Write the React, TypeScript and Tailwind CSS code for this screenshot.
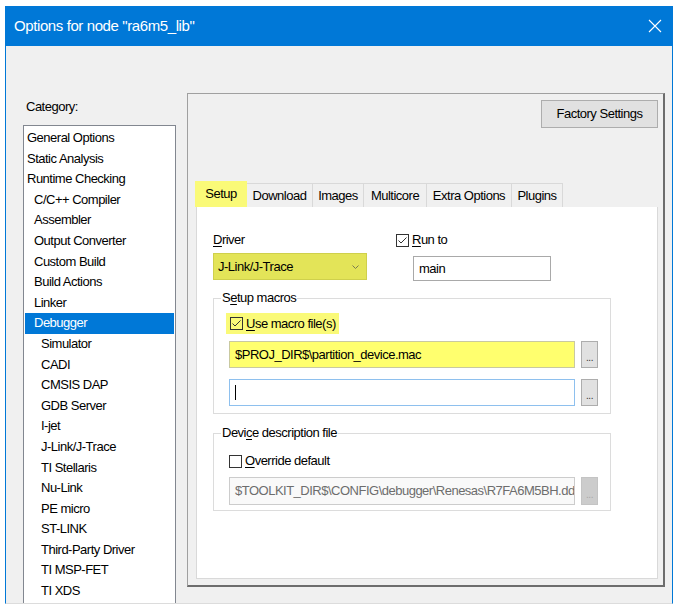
import React from 'react'

const categories: { label: string; level: number }[] = [
  { label: 'General Options', level: 0 },
  { label: 'Static Analysis', level: 0 },
  { label: 'Runtime Checking', level: 0 },
  { label: 'C/C++ Compiler', level: 1 },
  { label: 'Assembler', level: 1 },
  { label: 'Output Converter', level: 1 },
  { label: 'Custom Build', level: 1 },
  { label: 'Build Actions', level: 1 },
  { label: 'Linker', level: 1 },
  { label: 'Debugger', level: 1 },
  { label: 'Simulator', level: 2 },
  { label: 'CADI', level: 2 },
  { label: 'CMSIS DAP', level: 2 },
  { label: 'GDB Server', level: 2 },
  { label: 'I-jet', level: 2 },
  { label: 'J-Link/J-Trace', level: 2 },
  { label: 'TI Stellaris', level: 2 },
  { label: 'Nu-Link', level: 2 },
  { label: 'PE micro', level: 2 },
  { label: 'ST-LINK', level: 2 },
  { label: 'Third-Party Driver', level: 2 },
  { label: 'TI MSP-FET', level: 2 },
  { label: 'TI XDS', level: 2 },
]

const tabs = [
  { label: 'Setup', w: 'w-[52px]' },
  { label: 'Download', w: 'w-[66px]' },
  { label: 'Images', w: 'w-[51px]' },
  { label: 'Multicore', w: 'w-[63px]' },
  { label: 'Extra Options', w: 'w-[85px]' },
  { label: 'Plugins', w: 'w-[51px]' },
]

function CheckBox({ checked, fill = 'white' }: { checked: boolean; fill?: string }) {
  return (
    <svg width="13" height="13" viewBox="0 0 13 13" className="shrink-0">
      <rect x="0.5" y="0.5" width="12" height="12" fill={fill} stroke="#333333" />
      {checked && <polyline points="2.5,6.5 5,9 10.5,3.5" fill="none" stroke="#333333" strokeWidth="1" />}
    </svg>
  )
}

function BrowseButton({ disabled }: { disabled?: boolean }) {
  return (
    <div
      className={`w-[17px] flex items-end justify-center pb-[4px] text-[10px] leading-[10px] border ${
        disabled ? 'bg-[#cccccc] border-[#c4c4c4] text-[#a8a8a8]' : 'bg-[#e1e1e1] border-[#adadad] text-[#333333]'
      }`}
    >
      ...
    </div>
  )
}

export default function App() {
  return (
    <div
      className="w-[682px] h-[614px] bg-white pt-[6px] pl-[5px] overflow-hidden text-[13px] tracking-[-0.5px] text-black"
      style={{ fontFamily: '"Liberation Sans", Arial, sans-serif' }}
    >
      <div className="w-[668px] h-[598px] flex flex-col border-x border-b border-x-[#0078d7] border-b-[#dcdcdc]">
        {/* Title bar */}
        <div className="h-[40px] shrink-0 bg-[#0078d7] flex items-center justify-between pl-[8px] pr-[10px] text-white">
          <span className="text-[15px] tracking-[-0.4px]">Options for node "ra6m5_lib"</span>
          <svg width="14" height="14" viewBox="0 0 14 14">
            <path d="M1 1 L13 13 M13 1 L1 13" stroke="white" strokeWidth="1.1" />
          </svg>
        </div>

        {/* Body */}
        <div className="flex-1 min-h-0 bg-[#f0f0f0] flex overflow-hidden">
          {/* Category column */}
          <div className="pl-[17px] pt-[53px] flex flex-col">
            <div className="leading-[16px] h-[16px] mb-[10px] pl-[3px]">Category:</div>
            <div className="w-[153px] flex-1 bg-white border-t border-x border-[#828790] pt-[2px]">
              {categories.map((c) => {
                const selected = c.label === 'Debugger'
                const pad = c.level === 0 ? 'pl-[2px]' : c.level === 1 ? 'pl-[9px]' : 'pl-[16px]'
                return (
                  <div
                    key={c.label}
                    className={`mx-[1px] h-[20.6px] leading-[20.6px] whitespace-nowrap ${pad} ${
                      selected ? 'bg-[#0078d7] text-white' : ''
                    }`}
                  >
                    {c.label}
                  </div>
                )
              })}
            </div>
          </div>

          {/* Options panel */}
          <div className="ml-[11px] mt-[47px] mb-[16px] w-[478px] flex flex-col border-t border-l border-[#a0a0a0] border-b-2 border-r-2 border-b-[#6d6d6d] border-r-[#6d6d6d]">
            <div className="flex justify-end pt-[6px] pr-[5px]">
              <div className="w-[117px] h-[28px] bg-[#e1e1e1] border border-[#adadad] flex items-center justify-center">
                Factory Settings
              </div>
            </div>

            {/* Tabs */}
            <div className="mt-[53px] ml-[7px] h-[26px] flex items-end">
              {tabs.map((t, i) =>
                i === 0 ? (
                  <div key={t.label} className={`${t.w} h-[26px] bg-[#fafa78] flex items-center justify-center`}>
                    {t.label}
                  </div>
                ) : (
                  <div
                    key={t.label}
                    className={`${t.w} h-[24px] bg-[#f0f0f0] border-t border-r border-[#d9d9d9] flex items-center justify-center`}
                  >
                    {t.label}
                  </div>
                )
              )}
            </div>

            {/* Tab page */}
            <div className="ml-[8px] mr-[5px] mb-[6px] flex-1 bg-white border-x border-b border-[#d9d9d9] pl-[16px] pt-[25px]">
              {/* Driver / Run to */}
              <div className="flex">
                <div className="w-[154px] flex flex-col">
                  <div className="leading-[16px] h-[16px]">
                    <span className="underline underline-offset-2">D</span>river
                  </div>
                  <div className="mt-[5px] h-[27px] bg-[#e3e458] border border-[#cfd04c] flex items-center justify-between pl-[4px] pr-[7px]">
                    <span>J-Link/J-Trace</span>
                    <svg width="7" height="4" viewBox="0 0 7 4">
                      <polyline points="0.5,0.5 3.5,3.5 6.5,0.5" fill="none" stroke="#7a7a50" strokeWidth="1" />
                    </svg>
                  </div>
                </div>
                <div className="ml-[29px] flex flex-col">
                  <div className="h-[16px] flex items-center gap-[3px]">
                    <CheckBox checked />
                    <span className="leading-[16px]">
                      <span className="underline underline-offset-2">R</span>un to
                    </span>
                  </div>
                  <div className="mt-[8px] ml-[17px] w-[138px] h-[25px] border border-[#a9a9a9] bg-white flex items-center pl-[5px]">
                    main
                  </div>
                </div>
              </div>

              {/* Setup macros */}
              <div className="mt-[17px] w-[398px] border border-[#dcdcdc] flex flex-col pb-[7px]">
                <div className="-mt-[9px] ml-[7px] px-[1px] bg-white w-fit leading-[16px] h-[16px]">
                  S<span className="underline underline-offset-2">e</span>tup macros
                </div>
                <div className="mt-[7px] ml-[12px] w-fit h-[21px] bg-[#fafa78] flex items-center pl-[4px] pr-[3px] gap-[3px] whitespace-nowrap">
                  <CheckBox checked fill="#fafa78" />
                  <span>
                    <span className="underline underline-offset-2">U</span>se macro file(s)
                  </span>
                </div>
                <div className="mt-[7px] ml-[15px] h-[27px] flex gap-[6px]">
                  <div className="w-[346px] bg-[#ffff6e] border border-[#c9c9a0] flex items-center pl-[5px] whitespace-nowrap">
                    $PROJ_DIR$\partition_device.mac
                  </div>
                  <BrowseButton />
                </div>
                <div className="mt-[11px] ml-[15px] h-[27px] flex gap-[6px]">
                  <div className="w-[346px] bg-white border border-[#8ec0ee] flex items-center pl-[5px]">
                    <div className="w-[1px] h-[15px] bg-black" />
                  </div>
                  <BrowseButton />
                </div>
              </div>

              {/* Device description file */}
              <div className="mt-[19px] w-[398px] border border-[#dcdcdc] flex flex-col pb-[5px]">
                <div className="-mt-[9px] ml-[7px] px-[1px] bg-white w-fit leading-[16px] h-[16px]">
                  Devi<span className="underline underline-offset-2">c</span>e description file
                </div>
                <div className="mt-[12px] ml-[15px] h-[16px] flex items-center gap-[3px]">
                  <CheckBox checked={false} />
                  <span className="leading-[16px]">
                    <span className="underline underline-offset-2">O</span>verride default
                  </span>
                </div>
                <div className="mt-[8px] ml-[15px] h-[28px] flex gap-[6px]">
                  <div className="w-[346px] bg-[#f9f9f9] border border-[#cccccc] flex items-center pl-[5px] pr-[2px] whitespace-nowrap overflow-hidden text-[#6d6d6d]">
                    $TOOLKIT_DIR$\CONFIG\debugger\Renesas\R7FA6M5BH.dd
                  </div>
                  <BrowseButton disabled />
                </div>
              </div>
            </div>
          </div>
        </div>
      </div>
    </div>
  )
}
